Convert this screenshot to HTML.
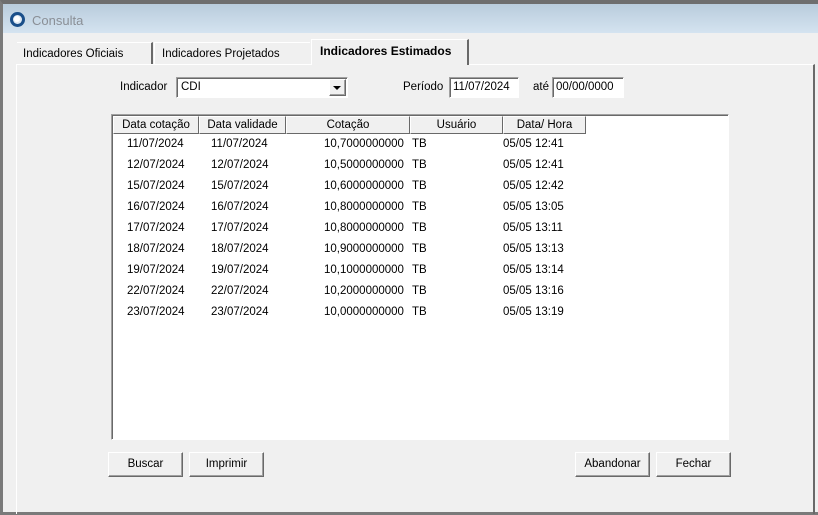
<!DOCTYPE html>
<html><head><meta charset="utf-8"><style>
*{box-sizing:border-box;margin:0;padding:0}
body{width:818px;height:515px;overflow:hidden;background:#f0f0f0;font-family:"Liberation Sans",sans-serif;font-size:11.5px;color:#000;position:relative}
.a{position:absolute}
.frame{left:0;top:0;width:818px;height:515px;border-top:4px solid #6e6e6e;border-left:3px solid #7a7a7a;border-bottom:3px solid #7a7a7a;background:#f0f0f0}
.title{left:3px;top:4px;width:815px;height:29px;background:linear-gradient(#b9ccdc,#d4e3f0)}
.sunk{background:#fff;border:1px solid;border-color:#a0a0a0 #fff #fff #a0a0a0;box-shadow:inset 1px 1px 0 #696969}
.btn{background:#f0f0f0;border:1px solid;border-color:#fff #696969 #696969 #fff;box-shadow:inset -1px -1px 0 #a0a0a0;text-align:center;line-height:22px}
.hd{top:116px;height:18px;border:1px solid;border-color:#fff #696969 #696969 #fff;background:#f0f0f0;text-align:center;line-height:17px}
.row{left:0;height:21px;width:500px}
.row span{position:absolute;top:4px}
</style></head><body>
<div class="a frame"></div>
<div class="a title"></div>
<svg class="a" style="left:9px;top:11px" width="17" height="17"><circle cx="8.5" cy="8.5" r="7.5" fill="#1a4f8a"/><circle cx="8.5" cy="8.5" r="4.5" fill="#dfe9f3"/><circle cx="8" cy="8" r="3" fill="#fff"/></svg>
<div class="a" style="left:32px;top:13px;color:#8a8f96;font-size:13px">Consulta</div>
<div class="a" style="left:16px;top:64px;width:799px;height:450px;border-top:1px solid #fff;border-left:1px solid #fff;border-right:2px solid #696969"></div>
<div class="a" style="left:17px;top:42px;width:136px;height:22px;border-top:1px solid #fff;border-right:2px solid #696969;line-height:22px;padding-left:6px">Indicadores Oficiais</div>
<div class="a" style="left:154px;top:42px;width:156px;height:22px;border-top:1px solid #fff;border-left:1px solid #fff;line-height:22px;padding-left:7px">Indicadores Projetados</div>
<div class="a" style="left:311px;top:39px;width:158px;height:26px;background:#f0f0f0;border-top:1px solid #fff;border-left:1px solid #fff;border-right:2px solid #696969;line-height:23px;padding-left:8px;font-weight:bold;font-size:12px">Indicadores Estimados</div>
<div class="a" style="left:120px;top:81px">Indicador</div>
<div class="a sunk" style="left:176px;top:77px;width:172px;height:21px;padding:3px 4px">CDI</div>
<div class="a btn" style="left:329px;top:79px;width:17px;height:17px"></div>
<svg class="a" style="left:333px;top:86px" width="9" height="5"><path d="M0 0H8L4 4Z" fill="#000"/></svg>
<div class="a" style="left:403px;top:81px">Período</div>
<div class="a sunk" style="left:449px;top:77px;width:70px;height:21px;padding:3px 3px">11/07/2024</div>
<div class="a" style="left:533px;top:81px">até</div>
<div class="a sunk" style="left:552px;top:77px;width:72px;height:21px;padding:3px 3px">00/00/0000</div>
<div class="a sunk" style="left:111px;top:114px;width:618px;height:326px"></div>
<div class="a hd" style="left:113px;width:86px">Data cotação</div>
<div class="a hd" style="left:199px;width:87px">Data validade</div>
<div class="a hd" style="left:286px;width:124px">Cotação</div>
<div class="a hd" style="left:410px;width:93px">Usuário</div>
<div class="a hd" style="left:503px;width:83px">Data/ Hora</div>
<div class="a" style="left:113px;top:134px;width:614px">
<div class="row a" style="top:0"><span style="left:14px">11/07/2024</span><span style="left:98px">11/07/2024</span><span style="left:211px">10,7000000000</span><span style="left:299px">TB</span><span style="left:390px">05/05 12:41</span></div>
<div class="row a" style="top:21px"><span style="left:14px">12/07/2024</span><span style="left:98px">12/07/2024</span><span style="left:211px">10,5000000000</span><span style="left:299px">TB</span><span style="left:390px">05/05 12:41</span></div>
<div class="row a" style="top:42px"><span style="left:14px">15/07/2024</span><span style="left:98px">15/07/2024</span><span style="left:211px">10,6000000000</span><span style="left:299px">TB</span><span style="left:390px">05/05 12:42</span></div>
<div class="row a" style="top:63px"><span style="left:14px">16/07/2024</span><span style="left:98px">16/07/2024</span><span style="left:211px">10,8000000000</span><span style="left:299px">TB</span><span style="left:390px">05/05 13:05</span></div>
<div class="row a" style="top:84px"><span style="left:14px">17/07/2024</span><span style="left:98px">17/07/2024</span><span style="left:211px">10,8000000000</span><span style="left:299px">TB</span><span style="left:390px">05/05 13:11</span></div>
<div class="row a" style="top:105px"><span style="left:14px">18/07/2024</span><span style="left:98px">18/07/2024</span><span style="left:211px">10,9000000000</span><span style="left:299px">TB</span><span style="left:390px">05/05 13:13</span></div>
<div class="row a" style="top:126px"><span style="left:14px">19/07/2024</span><span style="left:98px">19/07/2024</span><span style="left:211px">10,1000000000</span><span style="left:299px">TB</span><span style="left:390px">05/05 13:14</span></div>
<div class="row a" style="top:147px"><span style="left:14px">22/07/2024</span><span style="left:98px">22/07/2024</span><span style="left:211px">10,2000000000</span><span style="left:299px">TB</span><span style="left:390px">05/05 13:16</span></div>
<div class="row a" style="top:168px"><span style="left:14px">23/07/2024</span><span style="left:98px">23/07/2024</span><span style="left:211px">10,0000000000</span><span style="left:299px">TB</span><span style="left:390px">05/05 13:19</span></div>
</div>
<div class="a btn" style="left:108px;top:452px;width:75px;height:25px">Buscar</div>
<div class="a btn" style="left:189px;top:452px;width:75px;height:25px">Imprimir</div>
<div class="a btn" style="left:575px;top:452px;width:75px;height:25px">Abandonar</div>
<div class="a btn" style="left:656px;top:452px;width:75px;height:25px">Fechar</div>
</body></html>
